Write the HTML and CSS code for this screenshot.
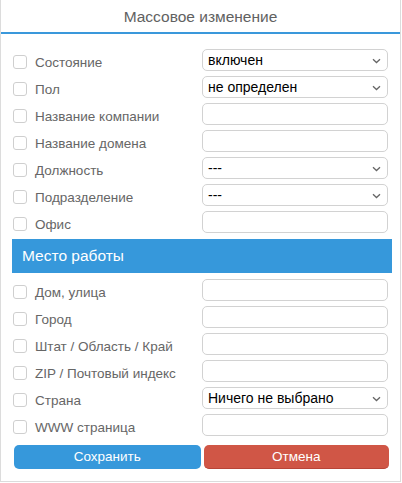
FILE: index.html
```html
<!DOCTYPE html>
<html lang="ru">
<head>
<meta charset="utf-8">
<title>Массовое изменение</title>
<link rel="stylesheet" href="styles.css">
</head>
<body>
<div class="panel">
  <div class="header">Массовое изменение</div>
  <div class="body">
    <div class="rows">
      <div class="row"><span class="cb"></span><span class="label">Состояние</span><div class="select"><span>включен</span><svg class="chev" width="9" height="6" viewBox="0 0 9 6"><path d="M1 1.2 L4.5 4.5 L8 1.2" fill="none" stroke="#666" stroke-width="1.3"/></svg></div></div>
      <div class="row"><span class="cb"></span><span class="label">Пол</span><div class="select"><span>не определен</span><svg class="chev" width="9" height="6" viewBox="0 0 9 6"><path d="M1 1.2 L4.5 4.5 L8 1.2" fill="none" stroke="#666" stroke-width="1.3"/></svg></div></div>
      <div class="row"><span class="cb"></span><span class="label">Название компании</span><div class="input"></div></div>
      <div class="row"><span class="cb"></span><span class="label">Название домена</span><div class="input"></div></div>
      <div class="row"><span class="cb"></span><span class="label">Должность</span><div class="select"><span>---</span><svg class="chev" width="9" height="6" viewBox="0 0 9 6"><path d="M1 1.2 L4.5 4.5 L8 1.2" fill="none" stroke="#666" stroke-width="1.3"/></svg></div></div>
      <div class="row"><span class="cb"></span><span class="label">Подразделение</span><div class="select"><span>---</span><svg class="chev" width="9" height="6" viewBox="0 0 9 6"><path d="M1 1.2 L4.5 4.5 L8 1.2" fill="none" stroke="#666" stroke-width="1.3"/></svg></div></div>
      <div class="row"><span class="cb"></span><span class="label">Офис</span><div class="input"></div></div>
    </div>
    <div class="band">Место работы</div>
    <div class="rows">
      <div class="row"><span class="cb"></span><span class="label">Дом, улица</span><div class="input"></div></div>
      <div class="row"><span class="cb"></span><span class="label">Город</span><div class="input"></div></div>
      <div class="row"><span class="cb"></span><span class="label">Штат / Область / Край</span><div class="input"></div></div>
      <div class="row"><span class="cb"></span><span class="label">ZIP / Почтовый индекс</span><div class="input"></div></div>
      <div class="row"><span class="cb"></span><span class="label">Страна</span><div class="select"><span>Ничего не выбрано</span><svg class="chev" width="9" height="6" viewBox="0 0 9 6"><path d="M1 1.2 L4.5 4.5 L8 1.2" fill="none" stroke="#666" stroke-width="1.3"/></svg></div></div>
      <div class="row"><span class="cb"></span><span class="label">WWW страница</span><div class="input"></div></div>
    </div>
    <div class="buttons">
      <button class="btn btn-save">Сохранить</button>
      <button class="btn btn-cancel">Отмена</button>
    </div>
  </div>
</div>
</body>
</html>
```

FILE: styles.css
```css
* { box-sizing: border-box; }
html, body { margin: 0; padding: 0; background: #fff; }
body { font-family: "Liberation Sans", Arial, sans-serif; }

.panel {
  width: 401px;
  height: 482px;
  border: 1px solid #dcdcdc;
  border-top: none;
  background: #fff;
}

.header {
  height: 34px;
  border-bottom: 2px solid #3a98db;
  text-align: center;
  font-size: 15.5px;
  line-height: 34px;
  color: #616161;
}

.body {
  padding: 15px 11px 0 11px;
}

.rows {
  display: flex;
  flex-direction: column;
  gap: 5px;
}

.row {
  display: flex;
  align-items: center;
  height: 22px;
}

.cb {
  width: 14px;
  height: 14px;
  margin-left: 1px;
  margin-top: 4px;
  border: 1px solid #cfcfcf;
  border-radius: 3px;
  background: #fff;
  flex: none;
}

.label {
  margin-left: 8px;
  margin-top: 4px;
  width: 167px;
  flex: none;
  font-size: 13.5px;
  color: #666;
  white-space: nowrap;
}

.input, .select {
  width: 186px;
  height: 22px;
  border: 1px solid #d2d2d2;
  border-radius: 5px;
  background: #fff;
  flex: none;
}

.select {
  display: flex;
  align-items: center;
  justify-content: space-between;
  padding: 0 6px 0 5px;
  font-size: 14px;
  color: #000;
}

.chev { flex: none; margin-top: 1px; }

.band {
  margin: 6px 0;
  height: 34px;
  width: 380px;
  background: #3698db;
  color: #fff;
  font-size: 15.5px;
  line-height: 34px;
  padding-left: 10px;
}

.buttons {
  margin-top: 9px;
  display: flex;
  gap: 3px;
  padding-left: 2px;
}

.btn {
  height: 24px;
  border: none;
  border-radius: 5px;
  color: #fff;
  font-family: "Liberation Sans", Arial, sans-serif;
  font-size: 13.5px;
  padding: 0;
  line-height: 24px;
}

.btn-save { width: 187px; background: #3698db; }
.btn-cancel { width: 186px; background: #d05646; border-bottom: 1px solid #b84437; }
```
